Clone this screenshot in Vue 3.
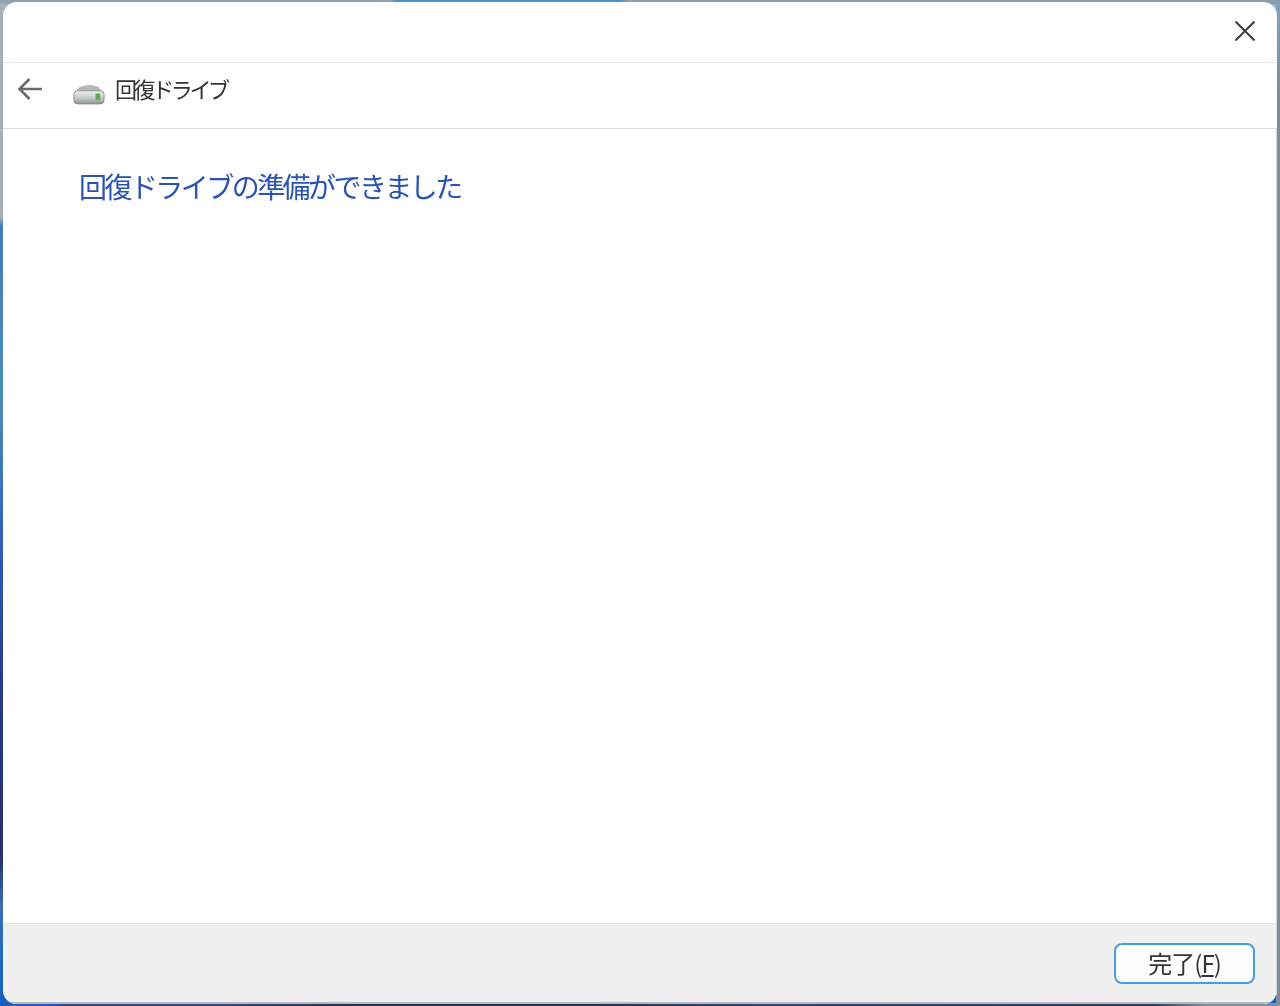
<script setup>
const heading = '回復ドライブの準備ができました'
</script>

<template>
  <div class="desktop">
    <div class="dialog">
      <div class="titlebar">
        <svg class="close" width="22" height="22" viewBox="0 0 22 22">
          <path d="M1.5 1.5 L20.5 20.5 M20.5 1.5 L1.5 20.5" stroke="#3a3a3a" stroke-width="1.9" fill="none" />
        </svg>
      </div>
      <div class="navbar">
        <svg class="back" width="26" height="24" viewBox="0 0 26 24">
          <path d="M2.5 12 H25 M12.5 2 L2.5 12 L12.5 22" stroke="#6b6b6b" stroke-width="2.6" fill="none" />
        </svg>
        <svg class="drive" width="32" height="21" viewBox="0 0 34 22">
          <defs>
            <linearGradient id="driveBody" x1="0" y1="0" x2="0" y2="1">
              <stop offset="0" stop-color="#eef0f0" />
              <stop offset="0.6" stop-color="#c2c6c6" />
              <stop offset="1" stop-color="#8e9292" />
            </linearGradient>
          </defs>
          <path d="M7 3 Q17 -1 27 3 L32 9 H2 Z" fill="#b4b8b8" />
          <rect x="1" y="7" width="32" height="14" rx="4" fill="url(#driveBody)" stroke="#8a8e8e" />
          <rect x="24" y="10" width="5" height="7" fill="#55b04a" />
        </svg>
        <span class="nav-title">回復ドライブ</span>
      </div>
      <div class="content">
        <h1 class="heading">{{ heading }}</h1>
      </div>
      <div class="footer">
        <button class="finish"><span>完了(<u>F</u>)</span></button>
      </div>
    </div>
  </div>
</template>

<style scoped>
.desktop {
  width: 1280px;
  height: 1006px;
  box-sizing: border-box;
  padding: 2px 3px 2px 3px;
  /* bits of wallpaper that show round the window */
  background:
    linear-gradient(90deg, #8fa3b2 0 30.5%, #4f90c4 31% 48.5%, #8a9eae 49% 100%) top / 100% 4px no-repeat,
    linear-gradient(90deg, #1a5cc0 0 4%, #2a4a90 5% 17%, #262f55 28% 45%, #2c4685 60%, #263a66 90%, #7b8d9e 94%) bottom / 100% 3px no-repeat,
    linear-gradient(180deg, #7fa3bd 0%, #7b8d9e 10%, #7b8d9e 100%) right / 4px 100% no-repeat,
    linear-gradient(180deg, #a5b1bb 0%, #a5b1bb 21.5%, #3f80bb 22.5%, #4a90b5 40%, #2c5cb8 55%, #2a3a8a 68%, #232f70 85%, #3a70b0 90%, #1260c8 100%);
  font-family: "Noto Sans CJK JP", "Liberation Sans", sans-serif;
}

.dialog {
  height: 100%;
  display: flex;
  flex-direction: column;
  background: #fff;
  border-radius: 14px;
  overflow: hidden;
}

.titlebar {
  height: 61px;
  flex: none;
  display: flex;
  justify-content: flex-end;
  padding: 18px 21px 0 0;
  box-sizing: border-box;
  border-bottom: 1px solid #e6e6e6;
}

.navbar {
  height: 66px;
  flex: none;
  display: flex;
  align-items: center;
  box-sizing: border-box;
  padding: 0 0 14px 14px;
  border-bottom: 1px solid #dcdcdc;
}

.back,
.drive,
.close,
.nav-title,
.heading,
.finish span {
  filter: blur(0.7px);
}

.drive {
  margin-left: 30px;
  margin-top: 12px;
}

.nav-title {
  margin-left: 10px;
  margin-bottom: 2px;
  font-size: 22px;
  letter-spacing: -3.4px;
  color: #333;
}

.content {
  flex: 1;
  padding: 37px 76px;
  border-right: 1px solid #d4d4d4;
}

.heading {
  margin: 0;
  font-size: 28px;
  font-weight: 400;
  letter-spacing: -2.55px;
  color: #2a52b4;
}

.footer {
  height: 81px;
  flex: none;
  display: flex;
  justify-content: flex-end;
  box-sizing: border-box;
  padding: 19px 21px 0 0;
  background: #f0f0f0;
  border-top: 1px solid #e4e4e4;
  border-right: 1px solid #d4d4d4;
  border-bottom: 2px solid #b8b8b8;
}

.finish {
  width: 141px;
  height: 41px;
  padding: 0 0 6px;
  background: #fdfdfd;
  border: 2px solid #4a9be0;
  border-radius: 8px;
  font-family: inherit;
  font-size: 24px;
  letter-spacing: -1px;
  color: #333;
}

.finish span {
  display: inline-block;
}
</style>
